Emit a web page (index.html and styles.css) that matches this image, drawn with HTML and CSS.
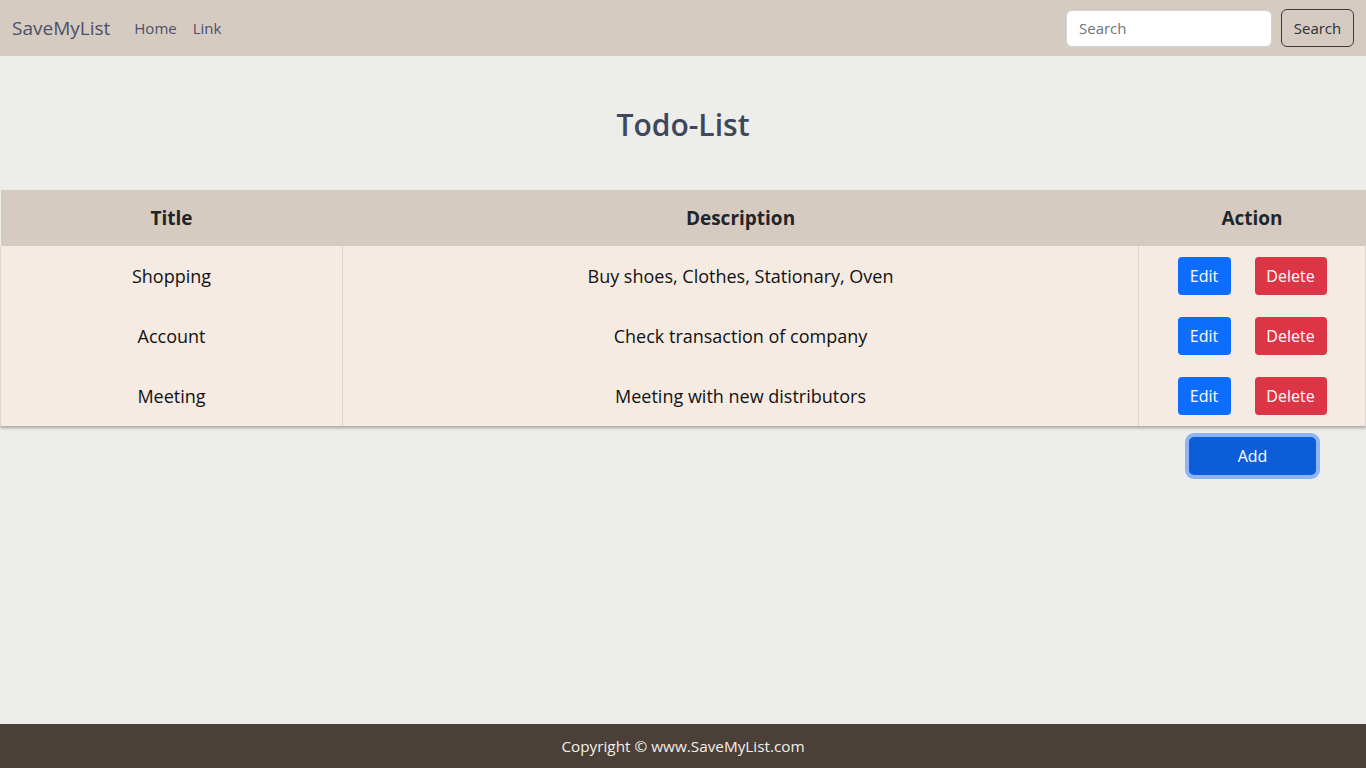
FILE: index.html
```html
<!DOCTYPE html>
<html lang="en">
<head>
<meta charset="utf-8">
<title>SaveMyList</title>
<link rel="stylesheet" href="styles.css">
</head>
<body>
<nav class="navbar">
  <div class="nav-left">
    <a class="brand" href="#">SaveMyList</a>
    <a class="nav-link" href="#">Home</a>
    <a class="nav-link" href="#">Link</a>
  </div>
  <form class="search">
    <input class="search-input" type="text" placeholder="Search">
    <button class="search-btn" type="button">Search</button>
  </form>
</nav>
<main class="main">
  <h1 class="title">Todo-List</h1>
  <table class="todo-table">
    <thead>
      <tr><th class="col-title">Title</th><th class="col-desc">Description</th><th class="col-action">Action</th></tr>
    </thead>
    <tbody>
      <tr><td>Shopping</td><td>Buy shoes, Clothes, Stationary, Oven</td><td><div class="actions"><button class="btn btn-edit">Edit</button><button class="btn btn-delete">Delete</button></div></td></tr>
      <tr><td>Account</td><td>Check transaction of company</td><td><div class="actions"><button class="btn btn-edit">Edit</button><button class="btn btn-delete">Delete</button></div></td></tr>
      <tr><td>Meeting</td><td>Meeting with new distributors</td><td><div class="actions"><button class="btn btn-edit">Edit</button><button class="btn btn-delete">Delete</button></div></td></tr>
    </tbody>
  </table>
  <div class="add-row">
    <div class="add-cell"><button class="btn btn-add">Add</button></div>
  </div>
</main>
<footer class="footer">Copyright © www.SaveMyList.com</footer>
</body>
</html>
```
FILE: styles.css
```css
* { box-sizing: border-box; }
html, body { margin: 0; padding: 0; height: 100%; }
body {
  font-family: "Open Sans", "Noto Sans", sans-serif;
  background: #edede9;
  color: #212529;
  display: flex;
  flex-direction: column;
  min-height: 768px;
}
a { text-decoration: none; }
.navbar {
  height: 56px;
  flex: 0 0 56px;
  background: #d6cbc1;
  display: flex;
  align-items: center;
  justify-content: space-between;
  padding: 0 12px;
}
.nav-left { display: flex; align-items: center; }
.brand {
  font-size: 19px;
  color: #4b5069;
  margin-right: 24px;
}
.nav-link {
  font-size: 15px;
  color: #4b5069;
  margin-right: 16px;
}
.search { display: flex; align-items: center; gap: 9px; }
.search-input {
  width: 206px;
  height: 37px;
  border: 1px solid #ced4da;
  border-radius: 6px;
  padding: 0 12px;
  font-family: inherit;
  font-size: 15px;
  background: #fff;
}
.search-input::placeholder { color: #6c757d; }
.search-btn {
  height: 38px;
  width: 73px;
  border: 1px solid #3c3a37;
  border-radius: 6px;
  background: transparent;
  font-family: inherit;
  font-size: 15px;
  color: #2d2f33;
}
.main { flex: 1; }
.title {
  margin: 0;
  height: 134px;
  text-align: center;
  font-size: 30px;
  font-weight: 600;
  color: #3f475c;
  line-height: 40px;
  display: flex;
  align-items: center;
  justify-content: center;
  padding-top: 4px;
}
.todo-table {
  width: 100%;
  border-collapse: collapse;
  box-shadow: 0 2px 3px rgba(0,0,0,0.3);
}
.todo-table th {
  height: 56px;
  background: #d6cbc1;
  font-size: 19px;
  font-weight: 700;
  color: #212529;
  text-align: center;
  padding: 0;
}
.col-title { width: 342px; }
.col-action { width: 227px; }
.todo-table td {
  height: 60px;
  background: #f5ebe2;
  text-align: center;
  font-size: 18px;
  color: #111;
  border-left: 1px solid #ddd6d0;
  border-right: 1px solid #ddd6d0;
  padding: 0;
}
.actions { display: flex; justify-content: center; gap: 24px; }
.btn {
  font-family: inherit;
  font-size: 16px;
  color: #fff;
  border: none;
  border-radius: 4px;
  height: 38px;
}
.btn-edit { background: #0d6efd; width: 53px; }
.btn-delete { background: #dc3545; width: 72px; }
.add-row { display: flex; justify-content: flex-end; padding-top: 11px; }
.add-cell { width: 227px; display: flex; justify-content: center; }
.btn-add {
  width: 127px;
  height: 38px;
  background: #0b5ed7;
  font-size: 16px;
  border-radius: 5px;
  box-shadow: 0 0 0 4px #8db5f1;
}
.footer {
  height: 44px;
  flex: 0 0 44px;
  background: #4b4037;
  color: #f2efe9;
  font-size: 15.3px;
  display: flex;
  align-items: center;
  justify-content: center;
}
```
